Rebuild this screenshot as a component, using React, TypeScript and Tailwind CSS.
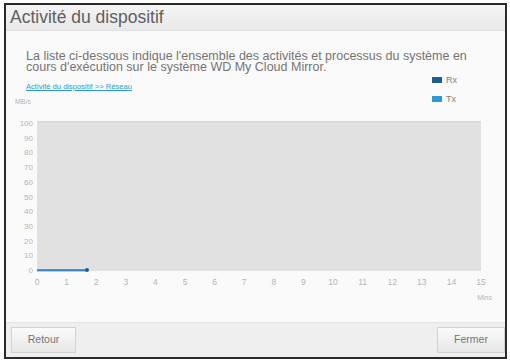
import React from "react";

const yTicks = [100, 90, 80, 70, 60, 50, 40, 30, 20, 10, 0];
const xTicks = Array.from({ length: 16 }, (_, i) => i);

function Chart() {
  return (
    <svg width="499" height="210" viewBox="0 0 499 210" className="block" style={{ fontFamily: '"Liberation Sans", Arial, sans-serif' }}>
      <text x="9" y="9" fontSize="7" fill="#b4b4b4">MB/s</text>
      <rect x="31" y="26" width="444" height="150" fill="#e1e1e1" />
      <line x1="31" y1="26.5" x2="475" y2="26.5" stroke="#d6d6d6" strokeWidth="1" />
      {yTicks.map((v) => (
        <text key={v} x="27" y={175 - v * 1.47 + 3} fontSize="8" fill="#b4b4b4" textAnchor="end">
          {v}
        </text>
      ))}
      {xTicks.map((i) => (
        <text key={i} x={31 + i * 29.6} y={190} fontSize="8.5" fill="#b4b4b4" textAnchor="middle">
          {i}
        </text>
      ))}
      <text x="486" y="205" fontSize="7" fill="#b4b4b4" textAnchor="end">Mins</text>
      <line x1="31" y1="175.5" x2="81" y2="175.5" stroke="#5aa9dc" strokeWidth="2" />
      <line x1="31" y1="175" x2="81" y2="175" stroke="#1f5f99" strokeWidth="1.2" />
      <circle cx="81" cy="175" r="2" fill="#1f5f99" />
    </svg>
  );
}

export default function App() {
  return (
    <div className="w-[510px] h-[362px] bg-white pt-[3px] pl-[4px]" style={{ fontFamily: '"Liberation Sans", Arial, sans-serif' }}>
      <div className="w-[503px] h-[356px] border-2 border-[#2a2a2a] flex flex-col bg-[#fafafa]">
        <div className="h-[26px] flex items-center pl-[4px] bg-gradient-to-b from-[#f4f4f4] to-[#e9e9e9] border-b border-[#e0e0e0]">
          <span className="text-[17.5px] text-[#606060] leading-none">Activité du dispositif</span>
        </div>
        <div className="relative h-[291px] flex flex-col">
          <div className="h-[64px] pl-[20px] pt-[20px]">
            <p className="text-[12.5px] leading-[11px] text-[#747474] w-[455px]">
              La liste ci-dessous indique l'ensemble des activités et processus du système en cours d'exécution sur le système WD My Cloud Mirror.
            </p>
            <a className="block mt-[9px] text-[7.6px] leading-[10px] text-[#2a9bd6] underline">
              Activité du dispositif &gt;&gt; Réseau
            </a>
          </div>
          <div className="absolute left-[426px] top-[44px] flex flex-col gap-[9px] text-[9px] leading-[10px] text-[#808080]">
            <div className="flex items-center gap-[4px]">
              <span className="w-[10px] h-[6px] bg-[#1c5d94]" />
              <span>Rx</span>
            </div>
            <div className="flex items-center gap-[4px]">
              <span className="w-[10px] h-[6px] bg-[#2b9ad8]" />
              <span>Tx</span>
            </div>
          </div>
          <Chart />
        </div>
        <div className="flex-1 flex items-center justify-between pl-[5px] pr-[0px] bg-[#efefef] border-t border-[#e4e4e4]">
          <button className="w-[65px] h-[26px] border border-[#d2d2d2] bg-gradient-to-b from-[#fbfbfb] to-[#e6e6e6] text-[10.5px] text-[#777]">
            Retour
          </button>
          <button className="w-[68px] h-[26px] border border-[#d2d2d2] bg-gradient-to-b from-[#fbfbfb] to-[#e6e6e6] text-[10.5px] text-[#777]">
            Fermer
          </button>
        </div>
      </div>
    </div>
  );
}
